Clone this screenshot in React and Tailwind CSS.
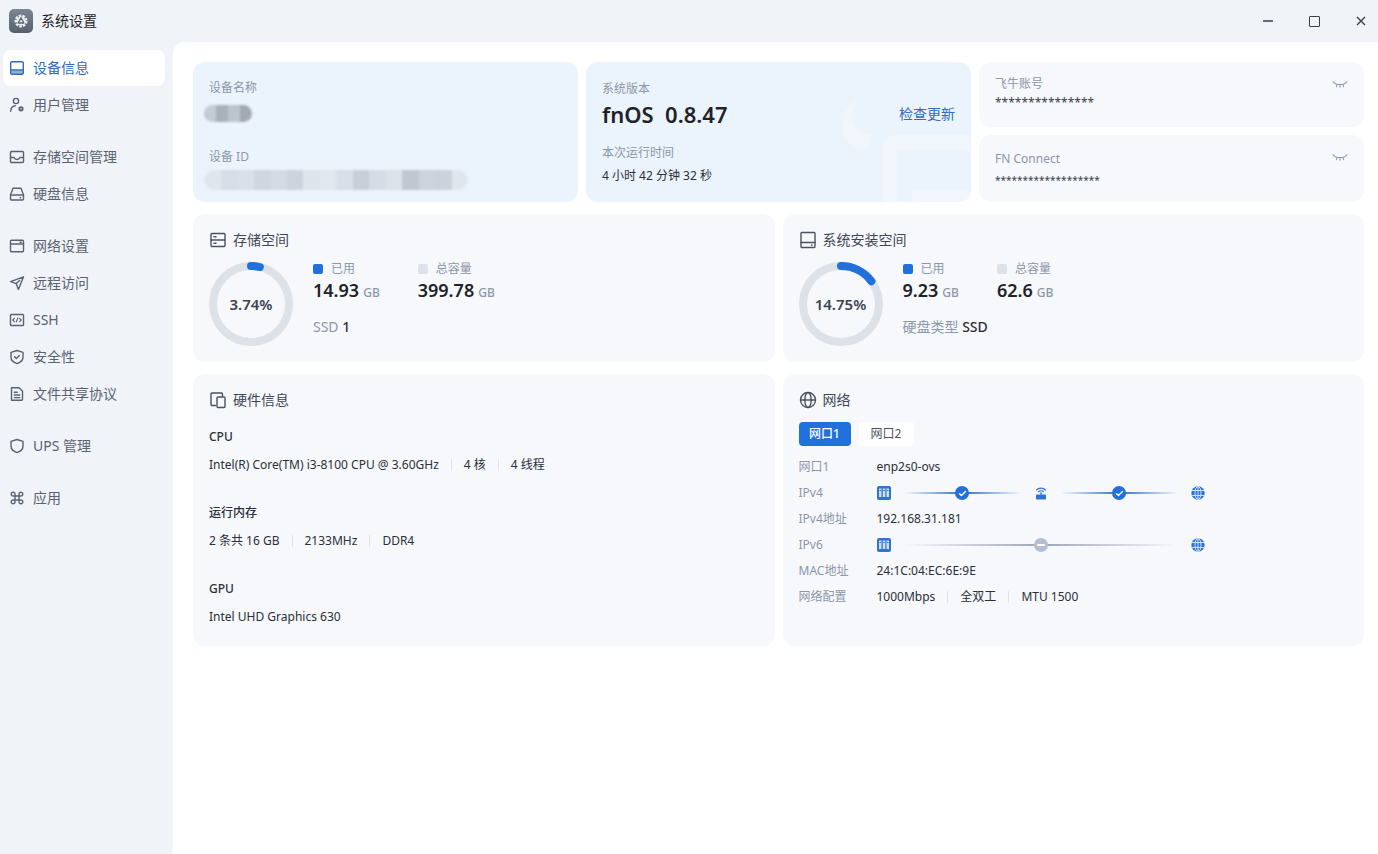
import React from "react";

const Svg = ({ children, size = 18, className = "", vb = 18 }) => (
  <svg
    width={size}
    height={size}
    viewBox={`0 0 ${vb} ${vb}`}
    fill="none"
    stroke="currentColor"
    strokeWidth="1.4"
    strokeLinecap="round"
    strokeLinejoin="round"
    className={className}
  >
    {children}
  </svg>
);

const icons = {
  device: (
    <>
      <rect x="2.7" y="2.7" width="12.6" height="12.6" rx="1.4" />
      <path d="M2.7 11h12.6" />
      <path d="M3 11.5h12v3.4H3z" fill="currentColor" fillOpacity="0.55" stroke="none" />
    </>
  ),
  user: (
    <>
      <circle cx="8" cy="5" r="2.6" />
      <path d="M2.7 15.3c0-3.2 1.9-5.2 4.6-5.6" />
      <circle cx="13" cy="12.8" r="1.7" strokeWidth="1.8" />
    </>
  ),
  storage: (
    <>
      <rect x="2.5" y="3.5" width="13" height="11" rx="1" />
      <path d="M2.5 9.5h3.6c.4 1.3 1.5 2 2.9 2s2.5-.7 2.9-2h3.6" />
    </>
  ),
  disk: (
    <>
      <path d="M5 3.3h8l2.5 6.7v4a1 1 0 0 1-1 1h-11a1 1 0 0 1-1-1v-4z" />
      <path d="M2.6 10h12.8" />
      <path d="M12.3 12.6h.2" strokeWidth="1.6" />
    </>
  ),
  network: (
    <>
      <rect x="2.5" y="3.3" width="13" height="11.4" rx="1" />
      <path d="M2.5 7h13" />
      <path d="M12 5.2h1.2" />
    </>
  ),
  remote: <path d="M15.5 2.8 2.6 7.6l5.6 2 2.2 5.8zM8.2 9.6l3.4-3.2" />,
  ssh: (
    <>
      <rect x="2.5" y="3.5" width="13" height="11" rx="0.8" />
      <path d="M6.4 7.3 4.8 9l1.6 1.7M11.6 7.3 13.2 9l-1.6 1.7M9.8 7 8.2 11" strokeWidth="1.1" />
    </>
  ),
  shield: (
    <>
      <path d="M9 2.5 15 4.3v5c0 3-2.6 5.200-6 6.300-3.400-1.100-6-3.300-6-6.300v-5z" />
      <path d="m6.700 8.800 1.700 1.700 3-3" />
    </>
  ),
  file: (
    <>
      <path d="M3.500 2.800h7.500l3.500 3.400v8a1 1 0 0 1-1 1h-10z" />
      <path d="M6.300 7.200h3M6.300 10h5.400M6.300 12.600h5.400" />
    </>
  ),
  ups: <path d="M9 2.500 15 4.300v5c0 3-2.600 5.200-6 6.300-3.400-1.100-6-3.300-6-6.300v-5z" />,
  apps: (
    <path d="M7 5.200v7.600M11 5.200v7.600M5.200 7h7.600M5.200 11h7.600M7 7H5.200A1.900 1.900 0 1 1 7 5.200zM11 7V5.200A1.900 1.900 0 1 1 12.800 7zM7 11v1.800A1.900 1.900 0 1 1 5.200 11zM11 11h1.800a1.900 1.900 0 1 1-1.800 1.800z" />
  ),
};

const navGroups = [
  [
    ["设备信息", "device"],
    ["用户管理", "user"],
  ],
  [
    ["存储空间管理", "storage"],
    ["硬盘信息", "disk"],
  ],
  [
    ["网络设置", "network"],
    ["远程访问", "remote"],
    ["SSH", "ssh"],
    ["安全性", "shield"],
    ["文件共享协议", "file"],
  ],
  [["UPS 管理", "ups"]],
  [["应用", "apps"]],
];

const Logo = () => (
  <div className="w-6 h-6 rounded-[5px] bg-gradient-to-b from-[#7d8794] to-[#565f6c] flex items-center justify-center">
    <svg width="18" height="18" viewBox="0 0 18 18" fill="none">
      <circle cx="9" cy="9" r="5.200" stroke="#e9ecef" strokeWidth="2.600" strokeDasharray="2.500 1.100" />
      <circle cx="9" cy="9" r="4.600" fill="#e9ecef" />
      <path d="M9 5.800 11.800 11H6.200z" stroke="#59626f" strokeWidth="1.300" strokeLinejoin="round" />
    </svg>
  </div>
);

const EyeOff = () => (
  <svg width="16" height="10" viewBox="0 0 16 10" fill="none" stroke="#8b97a8" strokeWidth="1" strokeLinecap="round">
    <path d="M1.500 2.800C4 5.300 12 5.300 14.500 2.800" />
    <path d="M.8 1.200 2.600 3.200M15.200 1.200 13.400 3.200M5 4.500 4.400 6.800M11 4.500 11.600 6.800M8 5 8 7.300" />
  </svg>
);

const Donut = ({ pct, label }) => {
  const r = 38;
  const c = 2 * Math.PI * r;
  const len = (c * pct) / 100;
  return (
    <div className="relative w-[84px] h-[84px] shrink-0 flex items-center justify-center">
      <svg width="84" height="84" viewBox="0 0 84 84" className="absolute inset-0">
        <circle cx="42" cy="42" r={r} fill="none" stroke="#dde1e8" strokeWidth="8" />
        <circle
          cx="42"
          cy="42"
          r={r}
          fill="none"
          stroke="#2270dc"
          strokeWidth="8"
          strokeLinecap="round"
          strokeDasharray={`${len} ${c}`}
          transform="rotate(-90 42 42)"
        />
      </svg>
      <span className="text-[15px] font-semibold text-[#3c4452]">{label}</span>
    </div>
  );
};

const Stat = ({ color, label, value }) => (
  <div>
    <div className="flex items-center h-[14px]">
      <span className={`w-[10px] h-[10px] rounded-[2px] ${color}`}></span>
      <span className="ml-2 text-xs text-[#8c97a8]">{label}</span>
    </div>
    <div className="mt-[2px] h-[24px] flex items-baseline whitespace-nowrap">
      <span className="text-[18px] font-semibold text-[#1f2329] leading-6">{value}</span>
      <span className="ml-1 text-xs font-medium text-[#8c97a8]">GB</span>
    </div>
  </div>
);

const CardTitle = ({ icon, children }) => (
  <div className="flex items-center h-5 text-sm text-[#3f4754]">
    <span className="w-[18px] h-[18px] flex items-center justify-center text-[#4a5260] mr-[6px]">{icon}</span>
    {children}
  </div>
);

const SepRow = ({ items }) => (
  <div className="flex items-center text-xs text-[#2a2f38] h-4">
    {items.map((t, i) => (
      <React.Fragment key={t}>
        {i > 0 && <span className="w-px h-3 bg-[#dfe3ea] mx-3"></span>}
        <span>{t}</span>
      </React.Fragment>
    ))}
  </div>
);

const Mosaic = ({ colors, h, w }) => (
  <div className="flex overflow-hidden rounded-full blur-[1px]" style={{ height: h, width: w }}>
    {colors.map((c, i) => (
      <div key={i} className="flex-1" style={{ background: c }}></div>
    ))}
  </div>
);

const PortIcon = () => (
  <svg width="14" height="14" viewBox="0 0 14 14" className="shrink-0">
    <rect width="14" height="14" rx="2" fill="#2f74d0" />
    <path d="M2 2.500h2.500V11H2zM5.800 2.500h2.500V11H5.800zM9.500 2.500H12V11H9.500z" fill="#cfe0f7" />
    <path d="M2.500 4h1.500v1H2.500zM6.300 4h1.500v1H6.300zM10 4h1.500v1H10z" fill="#2f74d0" />
  </svg>
);

const GlobeIcon = () => (
  <svg width="14" height="14" viewBox="0 0 14 14" className="shrink-0">
    <circle cx="7" cy="7" r="6.700" fill="#2f74d0" />
    <path d="M7 .5v13M1 4.500h12M1 9.500h12" stroke="#cfe0f7" strokeWidth="1" />
    <ellipse cx="7" cy="7" rx="3" ry="6.500" fill="none" stroke="#cfe0f7" strokeWidth="1" />
  </svg>
);

const RouterIcon = () => (
  <svg width="14" height="14" viewBox="0 0 14 14" fill="none" className="shrink-0">
    <path d="M2.200 4.200C4.800 1.300 9.200 1.300 11.800 4.200" stroke="#2f74d0" strokeWidth="1.300" />
    <path d="M4.300 6C5.800 4.500 8.200 4.500 9.700 6" stroke="#2f74d0" strokeWidth="1.300" />
    <rect x="6.200" y="6.500" width="1.600" height="2" fill="#2f74d0" />
    <rect x="2" y="8.500" width="10" height="5" rx="0.800" fill="#2f74d0" />
  </svg>
);

const Check = () => (
  <span className="w-[14px] h-[14px] rounded-full bg-[#2270dc] flex items-center justify-center">
    <svg width="9" height="9" viewBox="0 0 9 9" fill="none" stroke="#fff" strokeWidth="1.400" strokeLinecap="round" strokeLinejoin="round">
      <path d="m1.500 4.700 2 1.900 4-4" />
    </svg>
  </span>
);

const Minus = () => (
  <span className="w-[14px] h-[14px] rounded-full bg-[#b3c0d1] flex items-center justify-center">
    <span className="w-2 h-[2px] rounded bg-white"></span>
  </span>
);

const Line = ({ gray, className, children }) => (
  <div
    className={`h-[2px] flex items-center justify-center ${
      gray
        ? "bg-[linear-gradient(90deg,transparent,#9ea5b6_50%,transparent)]"
        : "bg-[linear-gradient(90deg,transparent,#2f6fc9_50%,transparent)]"
    } ${className}`}
  >
    {children}
  </div>
);

const NetRow = ({ label, children }) => (
  <div className="flex items-center h-[26px] text-xs">
    <span className="w-[78px] text-[#8c97a8]">{label}</span>
    {children}
  </div>
);

export default function App() {
  return (
    <div className="w-[1378px] h-[854px] overflow-hidden bg-[#f0f4f9] font-['Noto_Sans','Noto_Sans_CJK_SC',sans-serif] flex flex-col">
      {/* title bar */}
      <div className="h-[42px] shrink-0 flex items-center pl-[9px]">
        <Logo />
        <span className="ml-2 text-sm text-[#1f2329]">系统设置</span>
        <div className="ml-auto flex items-center gap-[36px] pr-[12px] text-[#3a3f47]">
          <span className="w-[10px] h-[2px] bg-[#666c75]"></span>
          <span className="w-[11px] h-[11px] border-[1.5px] border-[#3a3f47] rounded-[1px]"></span>
          <svg width="10" height="10" viewBox="0 0 10 10" stroke="#3a3f47" strokeWidth="1.400">
            <path d="m1 1 8 8M9 1 1 9" />
          </svg>
        </div>
      </div>

      <div className="flex-1 flex min-h-0">
        {/* sidebar */}
        <div className="w-[173px] shrink-0 pt-2 pl-[3px] flex flex-col gap-4">
          {navGroups.map((group, gi) => (
            <div key={gi} className="flex flex-col gap-px">
              {group.map(([name, icon]) => {
                const active = name === "设备信息";
                return (
                  <div
                    key={name}
                    className={`w-[162px] h-9 rounded-lg flex items-center pl-[5px] text-sm ${
                      active ? "bg-white text-[#2f6bc0]" : "text-[#5a6270]"
                    }`}
                  >
                    <Svg>{icons[icon]}</Svg>
                    <span className="ml-[7px]">{name}</span>
                  </div>
                );
              })}
            </div>
          ))}
        </div>

        {/* main */}
        <div className="flex-1 bg-white rounded-tl-xl pt-5 pl-5 pr-[14px] flex flex-col gap-3">
          <div className="grid grid-cols-3 gap-2 h-[140px]">
            <div className="rounded-xl bg-[#ebf3fc] px-4 pt-[18px]">
              <div className="text-xs leading-4 text-[#8c97a8]">设备名称</div>
              <div className="mt-[9px] -ml-[5px]">
                <Mosaic h={17} w={48} colors={["#c3ccd6", "#a9b0ba", "#bcc4ce", "#a2a9b3"]} />
              </div>
              <div className="mt-[27px] text-xs leading-4 text-[#8c97a8]">设备 ID</div>
              <div className="mt-[5px] -ml-[5px]">
                <Mosaic
                  h={20}
                  w={264}
                  colors={["#dfe6ee", "#d6dde6", "#d9e0e9", "#cfd6e0", "#d4dbe5", "#ccd3dd", "#dde4ec", "#e0e7ef", "#d8dfe8", "#c8cfd9", "#d5dce5", "#dbe2ea", "#c0c7d1", "#ccd3dc", "#cbd2db", "#e0e6ee"]}
                />
              </div>
            </div>

            <div className="relative overflow-hidden rounded-xl bg-[#ebf3fc] px-4 pt-[19px]">
              <svg width="385" height="140" viewBox="0 0 385 140" className="absolute inset-0" fill="#f1f6fd">
                <path d="M271 38c-9 4-15 14-15 25 0 13 10 24 25 25l5-15c-12 0-20-8-20-18 0-6 2-12 5-17z" />
                <path d="M296 140V88a15 15 0 0 1 15-15h74v15h-74v52z" />
                <path d="M326 140v-12h59v12z" />
              </svg>
              <div className="relative">
                <div className="text-xs leading-4 text-[#8c97a8]">系统版本</div>
                <div className="flex items-center justify-between h-8 mt-[1px]">
                  <span className="text-[22px] font-semibold text-[#1f2329] whitespace-pre">fnOS  0.8.47</span>
                  <span className="text-sm text-[#2f6bc0]">检查更新</span>
                </div>
                <div className="mt-[15px] text-xs leading-4 text-[#8c97a8]">本次运行时间</div>
                <div className="mt-[7px] text-xs leading-4 text-[#2a2f38]">4 小时 42 分钟 32 秒</div>
              </div>
            </div>

            <div className="flex flex-col gap-2">
              <div className="flex-1 rounded-xl bg-[#f6f8fc] px-4 pt-[14px] flex justify-between">
                <div>
                  <div className="text-xs leading-4 text-[#8c97a8]">飞牛账号</div>
                  <div className="mt-[3px] text-xs leading-4 text-[#3a3f47]">***************</div>
                </div>
                <div className="pt-[4px]"><EyeOff /></div>
              </div>
              <div className="flex-1 rounded-xl bg-[#f6f8fc] px-4 pt-[16px] flex justify-between">
                <div>
                  <div className="text-xs leading-4 text-[#8c97a8]">FN Connect</div>
                  <div className="mt-[5px] text-[10px] leading-4 text-[#3a3f47]">*******************</div>
                </div>
                <div className="pt-[2px]"><EyeOff /></div>
              </div>
            </div>
          </div>

          <div className="grid grid-cols-2 gap-2 h-[148px]">
            <div className="rounded-xl bg-[#f6f8fc] pl-4 pt-4">
              <CardTitle
                icon={
                  <Svg>
                    <rect x="2" y="2.500" width="14" height="13" rx="1" />
                    <path d="M2 9h14M5 5.800h2M5 12.300h2" />
                  </Svg>
                }
              >
                存储空间
              </CardTitle>
              <div className="flex mt-3">
                <Donut pct={3.74} label="3.74%" />
                <div className="ml-5">
                  <div className="flex gap-[38px]">
                    <Stat color="bg-[#2270dc]" label="已用" value="14.93" />
                    <Stat color="bg-[#dde1e8]" label="总容量" value="399.78" />
                  </div>
                  <div className="mt-[15px] text-sm leading-5 text-[#8c97a8]">
                    SSD <span className="font-medium text-[#2a2f38]">1</span>
                  </div>
                </div>
              </div>
            </div>

            <div className="rounded-xl bg-[#f6f8fc] pl-4 pt-4">
              <CardTitle
                icon={
                  <Svg>
                    <rect x="2" y="1.500" width="14" height="15" rx="1" />
                    <path d="M2 11.500h14M12.500 14h.5" />
                  </Svg>
                }
              >
                系统安装空间
              </CardTitle>
              <div className="flex mt-3">
                <Donut pct={14.75} label="14.75%" />
                <div className="ml-5">
                  <div className="flex gap-[38px]">
                    <Stat color="bg-[#2270dc]" label="已用" value="9.23" />
                    <Stat color="bg-[#dde1e8]" label="总容量" value="62.6" />
                  </div>
                  <div className="mt-[15px] text-sm leading-5 text-[#8c97a8]">
                    硬盘类型 <span className="font-medium text-[#2a2f38]">SSD</span>
                  </div>
                </div>
              </div>
            </div>
          </div>

          <div className="grid grid-cols-2 gap-2 h-[272px]">
            <div className="rounded-xl bg-[#f6f8fc] pl-4 pt-4">
              <CardTitle
                icon={
                  <Svg>
                    <path d="M6.500 14.500H3a1 1 0 0 1-1-1V3a1 1 0 0 1 1-1h9.500a1 1 0 0 1 1 1v2" />
                    <rect x="8" y="6" width="8" height="10.500" rx="1" />
                  </Svg>
                }
              >
                硬件信息
              </CardTitle>
              <div className="mt-[19px] text-xs font-medium leading-4 text-[#2a2f38]">CPU</div>
              <div className="mt-3">
                <SepRow items={["Intel(R) Core(TM) i3-8100 CPU @ 3.60GHz", "4 核", "4 线程"]} />
              </div>
              <div className="mt-8 text-xs font-medium leading-4 text-[#2a2f38]">运行内存</div>
              <div className="mt-3">
                <SepRow items={["2 条共 16 GB", "2133MHz", "DDR4"]} />
              </div>
              <div className="mt-8 text-xs font-medium leading-4 text-[#2a2f38]">GPU</div>
              <div className="mt-3">
                <SepRow items={["Intel UHD Graphics 630"]} />
              </div>
            </div>

            <div className="rounded-xl bg-[#f6f8fc] pl-4 pt-4">
              <CardTitle
                icon={
                  <Svg>
                    <circle cx="9" cy="9" r="7.500" />
                    <ellipse cx="9" cy="9" rx="3.200" ry="7.500" />
                    <path d="M1.500 9h15" />
                  </Svg>
                }
              >
                网络
              </CardTitle>
              <div className="flex gap-2 mt-3 text-xs">
                <span className="w-[52px] h-6 rounded bg-[#2270dc] text-white font-medium flex items-center justify-center">网口1</span>
                <span className="w-[55px] h-6 rounded bg-white text-[#4a5260] flex items-center justify-center">网口2</span>
              </div>
              <div className="mt-2 text-[#2a2f38]">
                <NetRow label="网口1">enp2s0-ovs</NetRow>
                <NetRow label="IPv4">
                  <div className="flex items-center w-[328px]">
                    <PortIcon />
                    <Line className="w-[117px] ml-[13px]"><Check /></Line>
                    <span className="mx-[13px]"><RouterIcon /></span>
                    <Line className="w-[117px]"><Check /></Line>
                    <span className="ml-[13px]"><GlobeIcon /></span>
                  </div>
                </NetRow>
                <NetRow label="IPv4地址">192.168.31.181</NetRow>
                <NetRow label="IPv6">
                  <div className="flex items-center w-[328px]">
                    <PortIcon />
                    <Line gray className="w-[274px] ml-[13px]"><Minus /></Line>
                    <span className="ml-[13px]"><GlobeIcon /></span>
                  </div>
                </NetRow>
                <NetRow label="MAC地址">24:1C:04:EC:6E:9E</NetRow>
                <NetRow label="网络配置">
                  <SepRow items={["1000Mbps", "全双工", "MTU 1500"]} />
                </NetRow>
              </div>
            </div>
          </div>
        </div>
      </div>
    </div>
  );
}
